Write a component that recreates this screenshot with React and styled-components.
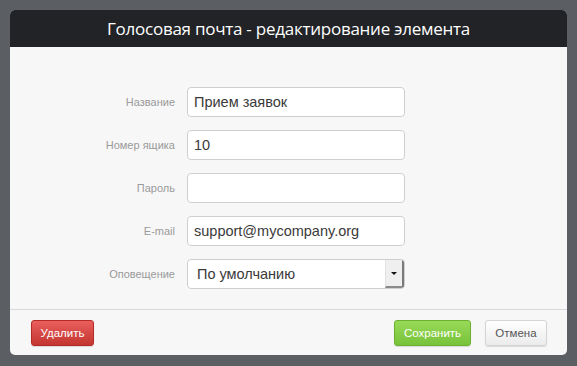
import React, { useState } from "react";
import styled, { createGlobalStyle } from "styled-components";

const GlobalStyle = createGlobalStyle`
  html, body {
    margin: 0;
    padding: 0;
    background: #5b5f63;
  }
  * {
    box-sizing: border-box;
  }
`;

const Page = styled.div`
  width: 577px;
  height: 366px;
  padding: 10px 10px 11px 10px;
  background: #5b5f63;
`;

const Modal = styled.div`
  width: 557px;
  height: 345px;
  background: #f7f7f7;
  border-radius: 5px;
  overflow: hidden;
  display: flex;
  flex-direction: column;
`;

const Header = styled.div`
  height: 37px;
  background: #212327;
  color: #fff;
  display: flex;
  align-items: center;
  justify-content: center;
  font-family: "Open Sans", "Noto Sans", sans-serif;
  font-size: 17px;
  letter-spacing: -0.25px;
  padding-bottom: 1px;
`;

const Body = styled.div`
  flex: 1;
  padding-top: 40px;
  display: grid;
  grid-template-columns: 165px 218px;
  column-gap: 12px;
  row-gap: 13px;
  align-content: start;
`;

const Label = styled.label`
  font-family: "Liberation Sans", Arial, sans-serif;
  font-size: 11px;
  color: #9a9a9a;
  text-align: right;
  align-self: center;
`;

const Input = styled.input`
  height: 30px;
  width: 100%;
  border: 1px solid #cfcfcf;
  border-radius: 4px;
  background: #fff;
  padding: 0 6px;
  font-family: "Liberation Sans", Arial, sans-serif;
  font-size: 14.5px;
  color: #3a3a3a;
  outline: none;
`;

const SelectBox = styled.div`
  height: 30px;
  display: flex;
  border: 1px solid #cfcfcf;
  border-radius: 4px;
  background: #fff;
  overflow: hidden;
`;

const SelectValue = styled.div`
  flex: 1;
  display: flex;
  align-items: center;
  padding-left: 9px;
  font-family: "Liberation Sans", Arial, sans-serif;
  font-size: 14.5px;
  color: #3a3a3a;
`;

const SelectArrow = styled.div`
  width: 19px;
  display: flex;
  align-items: center;
  justify-content: center;
  background: #efefef;
  border-left: 1px solid #e2e2e2;
  border-right: 2px solid #7a7a7a;
  border-bottom: 2px solid #8a8a8a;

  &::after {
    content: "";
    border-left: 3px solid transparent;
    border-right: 3px solid transparent;
    border-top: 3px solid #111;
  }
`;

const Footer = styled.div`
  height: 46px;
  border-top: 1px solid #d7d9de;
  display: flex;
  align-items: flex-start;
  padding: 10px 20px 0 21px;
  gap: 14px;
`;

const Spacer = styled.div`
  flex: 1;
`;

const palette = {
  danger: {
    bg: "linear-gradient(#e95f5c, #c33530)",
    border: "#b52a27",
    color: "#fff",
  },
  success: {
    bg: "linear-gradient(#98da58, #78c23a)",
    border: "#6cb032",
    color: "#fff",
  },
  plain: {
    bg: "linear-gradient(#ffffff, #ebebeb)",
    border: "#d4d4d4",
    color: "#555",
  },
};

const Button = styled.button`
  flex: none;
  width: ${(p) => p.$width}px;
  height: 26px;
  padding: 0;
  border-radius: 3px;
  font-family: "Liberation Sans", Arial, sans-serif;
  font-size: 11.5px;
  cursor: pointer;
  background: ${(p) => palette[p.$kind].bg};
  border: 1px solid ${(p) => palette[p.$kind].border};
  color: ${(p) => palette[p.$kind].color};
  box-shadow: 0 1px 1px rgba(0, 0, 0, 0.12);
`;

const App = () => {
  const [name, setName] = useState("Прием заявок");
  const [box, setBox] = useState("10");
  const [password, setPassword] = useState("");
  const [email, setEmail] = useState("support@mycompany.org");

  return (
    <>
      <GlobalStyle />
      <Page>
        <Modal>
          <Header>Голосовая почта - редактирование элемента</Header>
          <Body>
            <Label>Название</Label>
            <Input value={name} onChange={(e) => setName(e.target.value)} />
            <Label>Номер ящика</Label>
            <Input value={box} onChange={(e) => setBox(e.target.value)} />
            <Label>Пароль</Label>
            <Input
              type="password"
              value={password}
              onChange={(e) => setPassword(e.target.value)}
            />
            <Label>E-mail</Label>
            <Input value={email} onChange={(e) => setEmail(e.target.value)} />
            <Label>Оповещение</Label>
            <SelectBox>
              <SelectValue>По умолчанию</SelectValue>
              <SelectArrow />
            </SelectBox>
          </Body>
          <Footer>
            <Button $kind="danger" $width={63}>
              Удалить
            </Button>
            <Spacer />
            <Button $kind="success" $width={77}>
              Сохранить
            </Button>
            <Button $kind="plain" $width={62}>
              Отмена
            </Button>
          </Footer>
        </Modal>
      </Page>
    </>
  );
};

export default App;
